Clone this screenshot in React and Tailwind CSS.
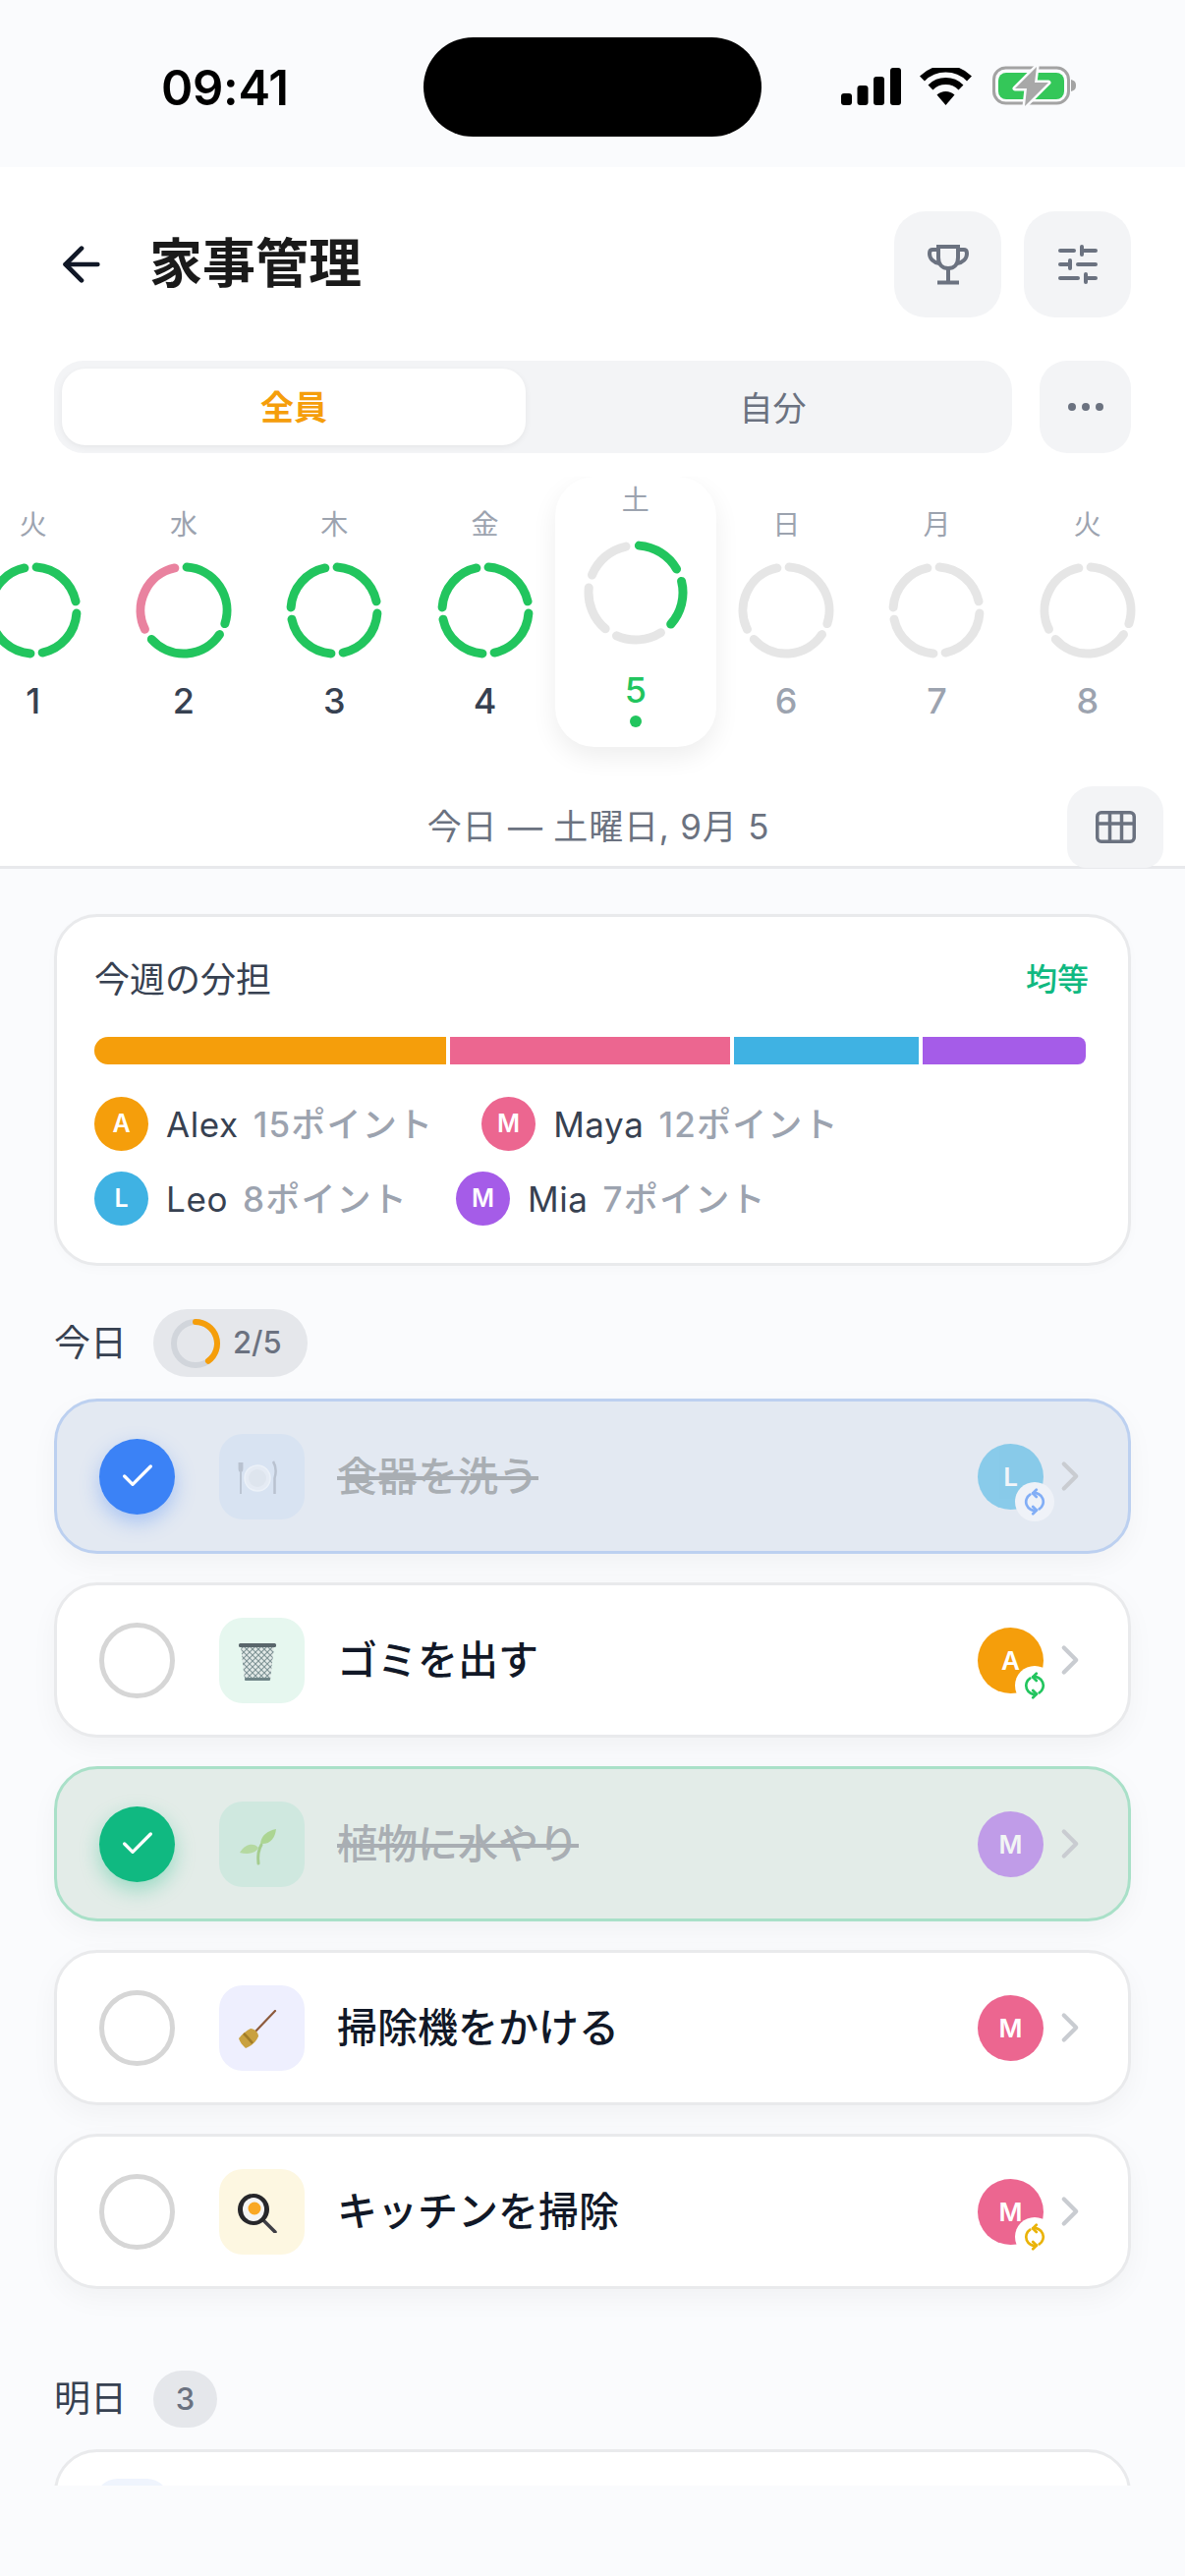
import { ArrowLeft, Check, ChevronRight, Ellipsis, SlidersHorizontal } from 'lucide-react'

const days = [
    { label: '火', num: 1, segs: ['g', 'g', 'g', 'g'], state: 'past' },
    { label: '水', num: 2, segs: ['g', 'g', 'p'], state: 'past' },
    { label: '木', num: 3, segs: ['g', 'g', 'g', 'g'], state: 'past' },
    { label: '金', num: 4, segs: ['g', 'g', 'g', 'g'], state: 'past' },
    { label: '土', num: 5, segs: ['g', 'g', 'n', 'n', 'n'], state: 'today' },
    { label: '日', num: 6, segs: ['n', 'n', 'n'], state: 'future' },
    { label: '月', num: 7, segs: ['n', 'n', 'n', 'n'], state: 'future' },
    { label: '火', num: 8, segs: ['n', 'n', 'n'], state: 'future' },
]

const ringColors = { g: '#22c55e', p: '#e9829f', n: '#e6e6e6' }

function arcPath(c, r, from, to) {
    const pt = (deg) => {
        const a = ((deg - 90) * Math.PI) / 180
        return `${c + r * Math.cos(a)} ${c + r * Math.sin(a)}`
    }
    return `M${pt(from)} A${r} ${r} 0 ${to - from > 180 ? 1 : 0} 1 ${pt(to)}`
}

function DayRing({ segs, size, r }) {
    const step = 360 / segs.length
    return (
        <svg width={size} height={size} className="block">
            {segs.map((s, i) => (
                <path
                    key={i}
                    d={arcPath(size / 2, r, -4 + i * step + 8, -4 + (i + 1) * step - 8)}
                    fill="none"
                    stroke={ringColors[s]}
                    strokeWidth="9"
                    strokeLinecap="round"
                />
            ))}
        </svg>
    )
}

function StatusIcons() {
    return (
        <div className="flex items-center mt-[69px]">
            <svg width="61" height="38" viewBox="0 0 61 38">
                <rect x="0" y="26" width="11" height="12" rx="3" fill="#000" />
                <rect x="16.500" y="18" width="11" height="20" rx="3" fill="#000" />
                <rect x="33" y="9" width="11" height="29" rx="3" fill="#000" />
                <rect x="50" y="0" width="11" height="38" rx="3" fill="#000" />
            </svg>
            <svg width="55" height="38" viewBox="0 0 55 38" className="ml-[18px]">
                <path d="M3.500 11 A34 34 0 0 1 51.500 11" fill="none" stroke="#000" strokeWidth="7" />
                <path d="M12 20 A22 22 0 0 1 43 20" fill="none" stroke="#000" strokeWidth="7" />
                <path d="M27.500 38 L18.500 27.500 A13 13 0 0 1 36.500 27.500 Z" fill="#000" />
            </svg>
            <svg width="86" height="42" viewBox="0 0 86 42" className="ml-[20px] -my-[2px]">
                <rect x="1.500" y="2" width="76" height="36" rx="12" fill="none" stroke="#a3a3a3" strokeWidth="3" />
                <rect x="6" y="7" width="67" height="27" rx="8" fill="#34c759" />
                <path d="M80 14 C84 15 85 17 85 20 C85 23 84 25 80 26 Z" fill="#a3a3a3" />
                <path d="M45 1 L23 23 H35 L33 41 L57 17 H43 Z" fill="#a8a8a8" stroke="#fafbfd" strokeWidth="5" strokeLinejoin="round" paintOrder="stroke" />
            </svg>
        </div>
    )
}

function TrophyIcon() {
    return (
        <svg width="42" height="41" viewBox="0 0 42 41" fill="none" stroke="#6b7280" strokeWidth="4">
            <path d="M11 2 H31 V13 C31 20 27 24 21 24 C15 24 11 20 11 13 Z" />
            <path d="M11 5 H5 C2.500 5 2 7 2 9 C2 14 6 18 12 19" />
            <path d="M31 5 H37 C39.500 5 40 7 40 9 C40 14 36 18 30 19" />
            <path d="M21 24 V38 M10 38.500 H32" />
        </svg>
    )
}

function GridIcon() {
    return (
        <svg width="41" height="33" viewBox="0 0 41 33" fill="none" stroke="#6b7280" strokeWidth="3.500">
            <rect x="1.750" y="1.750" width="37.500" height="29.500" rx="4" />
            <path d="M1.750 13 H39.250 M14.500 1.750 V31.250 M26.500 1.750 V31.250" />
        </svg>
    )
}

function DayColumn({ day }) {
    if (day.state === 'today') {
        return (
            <div className="w-[153.300px] shrink-0 flex justify-center">
                <div className="w-[164px] h-[275px] shrink-0 bg-white rounded-[40px] shadow-[0_10px_26px_rgba(0,0,0,0.07)] flex flex-col items-center pt-[6px]">
                    <span className="text-[28px] leading-[36px] text-[#9ca3af]">{day.label}</span>
                    <div className="mt-[23px]">
                        <DayRing segs={day.segs} size={106} r={48} />
                    </div>
                    <span className="mt-[24px] text-[36px] leading-[44px] font-medium text-[#22c55e]">{day.num}</span>
                    <div className="mt-[4px] w-[12px] h-[12px] rounded-full bg-[#22c55e]" />
                </div>
            </div>
        )
    }
    return (
        <div className="w-[153.300px] shrink-0 flex flex-col items-center pt-[31px]">
            <span className="text-[28px] leading-[36px] text-[#9ca3af]">{day.label}</span>
            <div className="mt-[19px]">
                <DayRing segs={day.segs} size={100} r={44} />
            </div>
            <span className={`mt-[20px] text-[36px] leading-[44px] font-medium ${day.state === 'past' ? 'text-[#374151]' : 'text-[#9ca3af]'}`}>
                {day.num}
            </span>
        </div>
    )
}

function LegendItem({ letter, name, points, color }) {
    return (
        <div className="flex items-center">
            <div className={`w-[55px] h-[55px] rounded-full ${color} flex items-center justify-center text-white text-[25px] font-semibold`}>
                {letter}
            </div>
            <span className="ml-[18px] text-[35px] leading-[44px] tracking-[0.6px] text-[#374151] font-normal">{name}</span>
            <span className="ml-[15px] text-[35px] leading-[44px] tracking-[1.2px] text-[#9ca3af] font-medium">{points}ポイント</span>
        </div>
    )
}

function SyncIcon({ color }) {
    return (
        <svg width="28" height="28" viewBox="0 0 24 24" fill="none" stroke={color} strokeWidth="2.300" strokeLinecap="round" strokeLinejoin="round">
            <path d="M16 18.300 A7.500 7.500 0 0 0 10.500 4.600" />
            <path d="M13.500 1.500 L10.300 4.600 L13.500 7.700" />
            <path d="M8 5.700 A7.500 7.500 0 0 0 13.500 19.400" />
            <path d="M10.500 22.500 L13.700 19.400 L10.500 16.300" />
        </svg>
    )
}

function PlateIcon() {
    return (
        <svg width="40" height="40" viewBox="0 0 40 40">
            <circle cx="20" cy="20" r="13" fill="#f3f4f6" stroke="#fff" strokeWidth="1.500" />
            <circle cx="20" cy="20" r="9" fill="#e5e7eb" />
            <path d="M3 4 V12 M1.500 4 V10 Q1.500 13 3 13 Q4.500 13 4.500 10 V4 M3 13 V36" fill="none" stroke="#9ca3af" strokeWidth="1.800" />
            <path d="M36 3 C39 8 39 15 37.500 20 V36" fill="none" stroke="#9ca3af" strokeWidth="2.500" />
        </svg>
    )
}

function BasketIcon() {
    const lines = []
    for (let i = -36; i < 40; i += 6) {
        lines.push(<path key={`a${i}`} d={`M${i} 4 L${i + 36} 40`} />)
        lines.push(<path key={`b${i}`} d={`M${i + 36} 4 L${i} 40`} />)
    }
    return (
        <svg width="40" height="40" viewBox="0 0 40 40">
            <defs>
                <clipPath id="basket-clip">
                    <path d="M3 4 H37 L33 38 H7 Z" />
                </clipPath>
            </defs>
            <path d="M3 4 H37 L33 38 H7 Z" fill="#e3eae8" />
            <g clipPath="url(#basket-clip)" stroke="#7f9496" strokeWidth="1.100">{lines}</g>
            <rect x="1" y="1" width="38" height="4" rx="1.500" fill="#59666b" />
            <rect x="7" y="36" width="26" height="3" rx="1" fill="#6f8587" />
        </svg>
    )
}

function SproutIcon() {
    return (
        <svg width="40" height="40" viewBox="0 0 40 40">
            <path d="M21 38 C20 30 21 24 24 19" fill="none" stroke="#7cb342" strokeWidth="3" strokeLinecap="round" />
            <path d="M21 22 C17 17 8 17 2 27 C10 29 18 28 21 22 Z" fill="#9ccc65" />
            <path d="M23 18 C24 9 30 5 39 3 C38 12 33 19 23 18 Z" fill="#8bc34a" />
        </svg>
    )
}

function BroomIcon() {
    return (
        <svg width="40" height="40" viewBox="0 0 40 40">
            <path d="M38 1 L17 23" stroke="#8d5a3c" strokeWidth="2.200" strokeLinecap="round" />
            <path d="M13 19 C17 19 21 23 21 27 C19 32 14 37 8 39 C5 36 2 33 1 29 C4 25 9 21 13 19 Z" fill="#c9a13f" />
            <path d="M6 24 C9 27 12 30 15 34" fill="none" stroke="#a17c28" strokeWidth="2.500" />
        </svg>
    )
}

function PanIcon() {
    return (
        <svg width="40" height="40" viewBox="0 0 40 40">
            <path d="M26 27 L38 39" stroke="#3f3f46" strokeWidth="3.500" strokeLinecap="round" />
            <circle cx="16" cy="16" r="16" fill="#27272a" />
            <ellipse cx="16" cy="16" rx="11" ry="12" fill="#f5f5f4" />
            <circle cx="17" cy="15" r="6.500" fill="#f9a825" />
        </svg>
    )
}

const tasks = [
    {
        title: '食器を洗う', done: true, card: 'bg-[#e3e9f2] border-[#bcd0f0]', tile: 'bg-[#d8e3f2]', icon: <PlateIcon />,
        check: 'bg-[#3b82f6] shadow-[0_8px_20px_rgba(59,130,246,0.35)]', letter: 'L', avatar: 'bg-[#3fb2e3]', sync: '#3b82f6',
    },
    {
        title: 'ゴミを出す', done: false, tile: 'bg-[#e6f7ef]', icon: <BasketIcon />, letter: 'A', avatar: 'bg-[#f59e0b]', sync: '#22c55e',
    },
    {
        title: '植物に水やり', done: true, card: 'bg-[#e3ece8] border-[#a9e0c8]', tile: 'bg-[#cfe8df]', icon: <SproutIcon />,
        check: 'bg-[#10b981] shadow-[0_8px_20px_rgba(16,185,129,0.35)]', letter: 'M', avatar: 'bg-[#a55ce8]',
    },
    {
        title: '掃除機をかける', done: false, tile: 'bg-[#eeeffe]', icon: <BroomIcon />, letter: 'M', avatar: 'bg-[#ec6690]',
    },
    {
        title: 'キッチンを掃除', done: false, tile: 'bg-[#fdf7e1]', icon: <PanIcon />, letter: 'M', avatar: 'bg-[#ec6690]', sync: '#eab308',
    },
]

function TaskCard({ task }) {
    return (
        <div
            className={`h-[158px] rounded-[44px] border-[3px] flex items-center pl-[43px] pr-[46px] shadow-[0_10px_28px_rgba(0,0,0,0.04)] ${task.done ? task.card : 'bg-white border-[#e9eaec]'}`}
        >
            {task.done ? (
                <div className={`w-[77px] h-[77px] rounded-full ${task.check} flex items-center justify-center`}>
                    <Check size={40} color="#fff" strokeWidth={2} />
                </div>
            ) : (
                <div className="w-[77px] h-[77px] rounded-full border-[5px] border-[#d6d6d6]" />
            )}
            <div className={`ml-[45px] w-[87px] h-[87px] rounded-[24px] ${task.tile} flex items-center justify-center pr-[10px] pt-[4px]`}>
                <div className={task.done ? 'opacity-50' : ''}>{task.icon}</div>
            </div>
            <span className={`ml-[33px] flex-1 text-[41px] leading-[52px] font-medium ${task.done ? 'text-[#a9aeb3] line-through' : 'text-[#111827]'}`}>
                {task.title}
            </span>
            <div className="relative">
                <div className={`w-[67px] h-[67px] rounded-full ${task.avatar} ${task.done ? 'opacity-55' : ''} flex items-center justify-center text-white text-[26px] font-semibold`}>
                    {task.letter}
                </div>
                {task.sync && (
                    <div className={`absolute left-[38px] top-[39px] w-[40px] h-[40px] rounded-full flex items-center justify-center ${task.done ? 'bg-[#eff2f8]' : 'bg-white'}`}>
                        <div className={task.done ? 'opacity-60' : ''}>
                            <SyncIcon color={task.sync} />
                        </div>
                    </div>
                )}
            </div>
            <ChevronRight size={50} strokeWidth={2} className="ml-[2px] -mr-[12px] text-[#c9ccd1]" />
        </div>
    )
}

export default function App() {
    return (
        <div className="h-[2621px] w-[1206px] overflow-hidden bg-[#fafbfd] font-['Inter','Noto_Sans_CJK_JP',sans-serif] flex flex-col">
            {/* Status bar */}
            <div className="h-[170px] shrink-0 flex items-start">
                <div className="w-[431px] pl-[164px] mt-[66px] text-[49px] leading-[48px] font-semibold text-black tracking-[-0.3px]">09:41</div>
                <div className="mt-[38px] w-[344px] h-[101px] rounded-full bg-black" />
                <div className="ml-[81px]">
                    <StatusIcons />
                </div>
            </div>

            {/* Header */}
            <div className="h-[714px] shrink-0 bg-white border-b-[3px] border-[#e8e9ec] flex flex-col">
                <div className="flex items-center px-[55px] pt-[45px]">
                    <ArrowLeft size={56} strokeWidth={2} className="text-[#111827]" />
                    <h1 className="ml-[41px] flex-1 text-[54px] leading-[64px] font-bold text-[#1a1a1a]">家事管理</h1>
                    <div className="w-[109px] h-[108px] rounded-[32px] bg-[#f3f4f6] flex items-center justify-center">
                        <TrophyIcon />
                    </div>
                    <div className="ml-[23px] w-[109px] h-[108px] rounded-[32px] bg-[#f3f4f6] flex items-center justify-center">
                        <SlidersHorizontal size={48} strokeWidth={2} className="text-[#6b7280]" />
                    </div>
                </div>

                <div className="flex px-[55px] mt-[44px]">
                    <div className="w-[975px] h-[94px] rounded-[30px] bg-[#f3f4f6] p-[8px] flex">
                        <div className="w-[472px] rounded-[24px] bg-white shadow-[0_2px_6px_rgba(0,0,0,0.06)] flex items-center justify-center text-[34px] leading-[40px] pt-[2px] font-semibold text-[#f59e0b]">全員</div>
                        <div className="flex-1 pl-[16px] pt-[2px] flex items-center justify-center text-[34px] font-normal text-[#6b7280]">自分</div>
                    </div>
                    <div className="ml-[28px] w-[93px] h-[94px] rounded-[28px] bg-[#f3f4f6] flex items-center justify-center">
                        <Ellipsis size={48} strokeWidth={2} className="text-[#6b7280]" fill="currentColor" />
                    </div>
                </div>

                {/* Day strip */}
                <div className="mt-[24px] h-[315px] overflow-hidden flex -ml-[43px] shrink-0">
                    {days.map((d) => (
                        <DayColumn key={d.num} day={d} />
                    ))}
                </div>

                <div className="flex items-end flex-1 pr-[22px]">
                    <div className="flex-1 pl-[132px] pb-[22px] text-center text-[35px] leading-[40px] tracking-[0.8px] text-[#6b7280]">今日 — 土曜日, 9月 5</div>
                    <div className="w-[98px] h-[83px] rounded-t-[26px] rounded-b-[20px] bg-[#f3f4f6] flex items-center justify-center">
                        <GridIcon />
                    </div>
                </div>
            </div>

            {/* Scroll area */}
            <div className="h-[1645px] shrink-0 overflow-hidden px-[55px] pt-[46px]">
                <div className="h-[358px] rounded-[44px] border-[3px] border-[#e9eaec] bg-white px-[38px] pt-[42px] shadow-[0_4px_12px_rgba(0,0,0,0.02)]">
                    <div className="flex items-center justify-between h-[44px] pr-[2px]">
                        <span className="text-[36px] font-normal text-[#374151]">今週の分担</span>
                        <span className="text-[32px] font-medium text-[#10b981]">均等</span>
                    </div>
                    <div className="mt-[36px] h-[28px] flex gap-[4px] w-[1009px]">
                        <div className="w-[358px] bg-[#f59e0b] rounded-l-full" />
                        <div className="w-[285px] bg-[#ec6690]" />
                        <div className="w-[188px] bg-[#3fb2e3]" />
                        <div className="flex-1 bg-[#a55ce8] rounded-r-[8px]" />
                    </div>
                    <div className="mt-[33px] flex gap-[49px]">
                        <LegendItem letter="A" name="Alex" points="15" color="bg-[#f59e0b]" />
                        <LegendItem letter="M" name="Maya" points="12" color="bg-[#ec6690]" />
                    </div>
                    <div className="mt-[21px] flex gap-[49px]">
                        <LegendItem letter="L" name="Leo" points="8" color="bg-[#3fb2e3]" />
                        <LegendItem letter="M" name="Mia" points="7" color="bg-[#a55ce8]" />
                    </div>
                </div>

                <div className="mt-[44px] flex items-center">
                    <span className="text-[37px] leading-[44px] font-normal text-[#374151]">今日</span>
                    <div className="ml-[27px] w-[157px] h-[69px] rounded-full bg-[#e5e7eb] flex items-center pl-[17px]">
                        <svg width="52" height="52" viewBox="0 0 52 52" fill="none" strokeWidth="6">
                            <circle cx="26" cy="26" r="22" stroke="#d1d5db" />
                            <path d={arcPath(26, 22, 0, 144)} stroke="#f59e0b" strokeLinecap="round" />
                        </svg>
                        <span className="ml-[12px] text-[31px] font-medium text-[#6b7280]">2/5</span>
                    </div>
                </div>

                <div className="mt-[22px] flex flex-col gap-[29px]">
                    {tasks.map((t) => (
                        <TaskCard key={t.title} task={t} />
                    ))}
                </div>

                <div className="mt-[83px] flex items-center">
                    <span className="text-[37px] leading-[44px] font-normal text-[#374151]">明日</span>
                    <div className="ml-[27px] w-[65px] h-[58px] rounded-full bg-[#e5e7eb] flex items-center justify-center text-[31px] font-medium text-[#6b7280]">3</div>
                </div>

                <div className="mt-[22px] h-[158px] rounded-[44px] border-[3px] border-[#e9eaec] bg-white pl-[38px] pt-[27px]">
                    <div className="w-[77px] h-[87px] rounded-[24px] bg-[#eff4fd]" />
                </div>
            </div>
        </div>
    )
}
